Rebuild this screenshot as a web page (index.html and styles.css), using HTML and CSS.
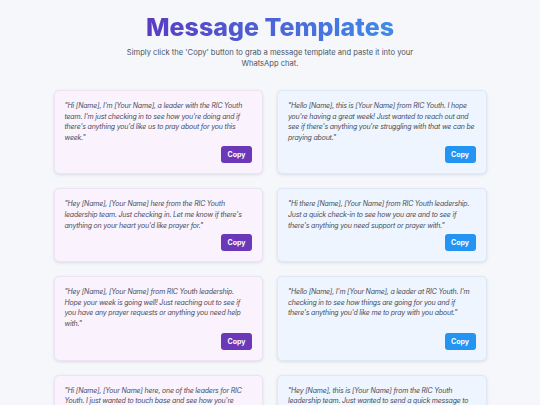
FILE: index.html
```html
<!DOCTYPE html>
<html>
<head>
  <title>Message Templates</title>
  <link rel="stylesheet" href="styles.css">
</head>
<body>
  <h1 class="title">Message Templates</h1>
  <p class="intro">Simply click the 'Copy' button to grab a message template and paste it into your WhatsApp chat.</p>

  <div class="templates">
    <div class="card purple">
      <p class="message">"Hi [Name], I'm [Your Name], a leader with the RIC Youth team. I'm just checking in to see how you're doing and if there's anything you'd like us to pray about for you this week."</p>
      <button class="copy-button" onclick="copyText(this)">Copy</button>
    </div>
    <div class="card blue">
      <p class="message">"Hello [Name], this is [Your Name] from RIC Youth. I hope you're having a great week! Just wanted to reach out and see if there's anything you're struggling with that we can be praying about."</p>
      <button class="copy-button" onclick="copyText(this)">Copy</button>
    </div>
    <div class="card purple">
      <p class="message">"Hey [Name], [Your Name] here from the RIC Youth leadership team. Just checking in. Let me know if there's anything on your heart you'd like prayer for."</p>
      <button class="copy-button" onclick="copyText(this)">Copy</button>
    </div>
    <div class="card blue">
      <p class="message">"Hi there [Name], [Your Name] from RIC Youth leadership. Just a quick check-in to see how you are and to see if there's anything you need support or prayer with."</p>
      <button class="copy-button" onclick="copyText(this)">Copy</button>
    </div>
    <div class="card purple">
      <p class="message">"Hey [Name], [Your Name] from RIC Youth leadership. Hope your week is going well! Just reaching out to see if you have any prayer requests or anything you need help with."</p>
      <button class="copy-button" onclick="copyText(this)">Copy</button>
    </div>
    <div class="card blue">
      <p class="message">"Hello [Name], I'm [Your Name], a leader at RIC Youth. I'm checking in to see how things are going for you and if there's anything you'd like me to pray with you about."</p>
      <button class="copy-button" onclick="copyText(this)">Copy</button>
    </div>
    <div class="card purple">
      <p class="message">"Hi [Name], [Your Name] here, one of the leaders for RIC Youth. I just wanted to touch base and see how you're doing this week and if there's anything we can pray about for you."</p>
      <button class="copy-button" onclick="copyText(this)">Copy</button>
    </div>
    <div class="card blue">
      <p class="message">"Hey [Name], this is [Your Name] from the RIC Youth leadership team. Just wanted to send a quick message to check in and see if there's anything you'd like prayer for."</p>
      <button class="copy-button" onclick="copyText(this)">Copy</button>
    </div>
  </div>

  <script>
    function copyText(button) {
      var text = button.parentNode.querySelector(".message").innerText;
      navigator.clipboard.writeText(text);
      button.innerText = "Copied!";
      setTimeout(function () {
        button.innerText = "Copy";
      }, 1500);
    }
  </script>
</body>
</html>
```

FILE: styles.css
```css
body {
  font-family: Inter, "Noto Sans", sans-serif;
  background-color: #f5f7fb;
  margin: 0;
  padding: 12px 0 20px;
}

.title {
  text-align: center;
  font-size: 25px;
  font-weight: 800;
  line-height: 31px;
  background: linear-gradient(90deg, #5a3cc2, #3f8be8);
  -webkit-background-clip: text;
  background-clip: text;
  color: transparent;
  width: fit-content;
  margin: 0 auto;
}

.intro {
  text-align: center;
  font-size: 7.6px;
  line-height: 11px;
  color: #4b5563;
  width: 300px;
  margin: 4px auto 0;
}

.templates {
  display: grid;
  grid-template-columns: 1fr 1fr;
  gap: 14px;
  width: 433px;
  margin: 21px auto 0;
}

.card {
  display: flex;
  flex-direction: column;
  padding: 10px 10px 10px 10px;
  border-radius: 5px;
  border: 1px solid #ece4f3;
  box-shadow: 0 1px 3px rgba(30, 40, 70, 0.12);
}

.card.purple {
  background-color: #faf3fe;
}

.card.blue {
  background-color: #eef5fe;
  border-color: #dfe9f6;
}

.message {
  font-size: 7px;
  line-height: 10.6px;
  letter-spacing: -0.2px;
  font-style: italic;
  color: #484d5a;
  margin: 0 0 3px;
  flex: 1;
}

.copy-button {
  align-self: flex-end;
  width: 31px;
  height: 17px;
  padding: 0;
  border: none;
  border-radius: 3px;
  font-family: Inter, sans-serif;
  font-size: 7px;
  font-weight: 700;
  color: #fff;
  cursor: pointer;
}

.purple .copy-button {
  background-color: #6a38b8;
}

.blue .copy-button {
  background-color: #2394f1;
}
```
